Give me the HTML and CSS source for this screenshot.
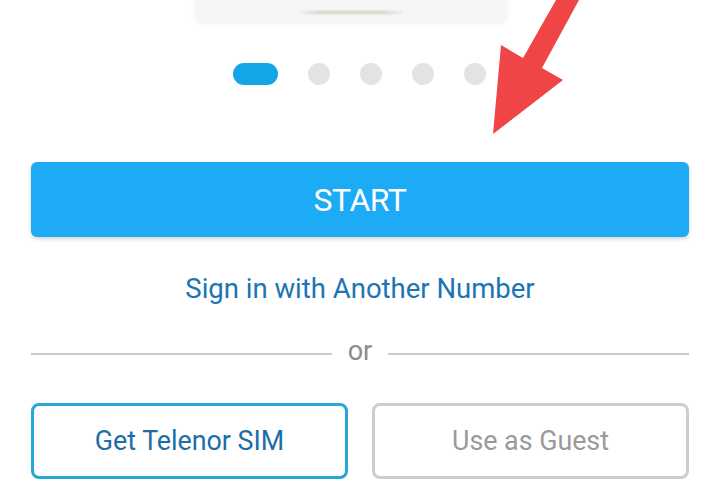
FILE: index.html
```html
<!DOCTYPE html>
<html lang="en">
<head>
    <meta charset="UTF-8">
    <meta name="viewport" content="width=device-width, initial-scale=1.0">
    <title>Telenor - Welcome</title>
    <link rel="stylesheet" href="styles.css">
</head>
<body>
    <div class="screen">
        <div class="preview">
            <div class="preview-line"></div>
        </div>

        <div class="dots">
            <span class="dot active"></span>
            <span class="dot"></span>
            <span class="dot"></span>
            <span class="dot"></span>
            <span class="dot"></span>
        </div>

        <button class="btn-start">START</button>

        <a class="link-other" href="#">Sign in with Another Number</a>

        <div class="divider">
            <span class="divider-line"></span>
            <span class="divider-text">or</span>
            <span class="divider-line"></span>
        </div>

        <div class="actions">
            <button class="btn-outline primary">Get Telenor SIM</button>
            <button class="btn-outline muted">Use as Guest</button>
        </div>

        <!-- red pointer drawn over the screenshot -->
        <svg class="pointer" width="720" height="140" viewBox="0 0 720 140">
            <polygon points="556,0 579,0 542,68 563,80 493,134 501,45 523,58" fill="#ef4546"/>
        </svg>
    </div>
</body>
</html>
```

FILE: styles.css
```css
/* welcome screen */
body {
    margin: 0;
    background-color: #ffffff;
    font-family: 'Roboto', 'Noto Sans', sans-serif;
}

.screen {
    position: relative;
    width: 720px;
    height: 495px;
    padding: 0 31px;
    box-sizing: border-box;
    overflow: hidden;
}

.preview {
    width: 312px;
    height: 24px;
    margin-left: 164px;
    background-color: #f6f6f6;
    border-radius: 0 0 10px 10px;
    box-shadow: 0 0 4px 2px #f8f8f8;
    display: flex;
    justify-content: center;
    align-items: flex-start;
}

.preview-line {
    width: 104px;
    height: 3px;
    margin-top: 11px;
    border-radius: 2px;
    background: linear-gradient(90deg, rgba(214, 210, 200, 0.2), #d4d0c6 20%, #d4d0c6 80%, rgba(214, 210, 200, 0.2));
    filter: blur(1px);
}

.dots {
    display: flex;
    justify-content: center;
    gap: 30px;
    margin-top: 39px;
    padding-right: 1px;
}

.dot {
    width: 22px;
    height: 22px;
    border-radius: 50%;
    background-color: #e3e3e3;
}

.dot.active {
    width: 45px;
    border-radius: 11px;
    background-color: #12a5e8;
}

.btn-start {
    display: block;
    width: 100%;
    height: 75px;
    margin-top: 77px;
    border: none;
    border-radius: 6px;
    background-color: #1dabf6;
    color: #ffffff;
    font-family: inherit;
    font-size: 32px;
    letter-spacing: -0.5px;
    box-shadow: 0 2px 4px rgba(0, 0, 0, 0.18);
}

.link-other {
    display: block;
    margin-top: 35px;
    text-align: center;
    text-decoration: none;
    color: #1b74b3;
    font-size: 27.5px;
    line-height: 34px;
}

.divider {
    display: flex;
    align-items: center;
    gap: 16px;
    margin-top: 30px;
}

.divider-line {
    flex: 1;
    height: 2px;
    background-color: #cacaca;
}

.divider-text {
    color: #8c8c8c;
    font-size: 27px;
    line-height: 30px;
    padding-bottom: 6px;
}

.actions {
    display: flex;
    gap: 24px;
    margin-top: 31px;
}

.btn-outline {
    flex: 1;
    height: 76px;
    background-color: #ffffff;
    border-radius: 8px;
    font-family: inherit;
    font-size: 26.8px;
}

.btn-outline.primary {
    border: 3px solid #27a6d8;
    color: #1b6ea8;
}

.btn-outline.muted {
    border: 3px solid #cdcdcd;
    color: #9a9a9a;
}

.pointer {
    position: absolute;
    top: 0;
    left: 0;
}
```
